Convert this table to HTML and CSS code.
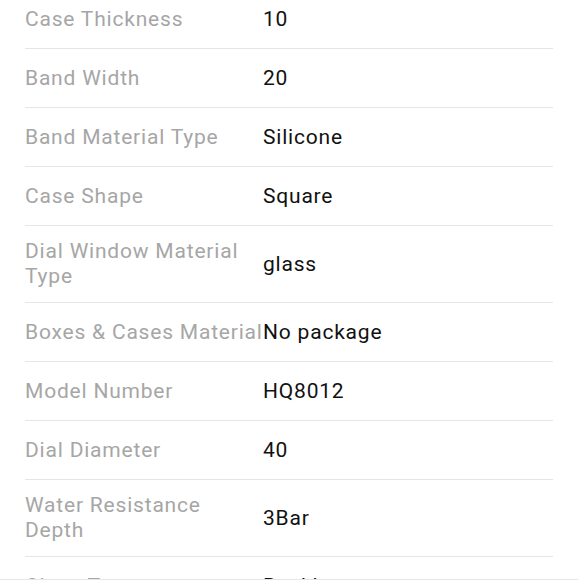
FILE: index.html
```html
<!DOCTYPE html>
<html lang="en">
<head>
<meta charset="utf-8">
<title>Specifications</title>
<link rel="stylesheet" href="styles.css">
</head>
<body>
<div class="specs">
  <div class="row"><div class="label">Case Thickness</div><div class="value">10</div></div>
  <div class="row"><div class="label">Band Width</div><div class="value">20</div></div>
  <div class="row"><div class="label">Band Material Type</div><div class="value">Silicone</div></div>
  <div class="row"><div class="label">Case Shape</div><div class="value">Square</div></div>
  <div class="row"><div class="label">Dial Window Material Type</div><div class="value">glass</div></div>
  <div class="row"><div class="label">Boxes &amp; Cases Material</div><div class="value">No package</div></div>
  <div class="row"><div class="label">Model Number</div><div class="value">HQ8012</div></div>
  <div class="row"><div class="label">Dial Diameter</div><div class="value">40</div></div>
  <div class="row"><div class="label">Water Resistance Depth</div><div class="value">3Bar</div></div>
  <div class="row"><div class="label">Clasp Type</div><div class="value">Buckle</div></div>
</div>
<div class="bottom-bar"></div>
</body>
</html>
```

FILE: styles.css
```css
html, body {
  margin: 0;
  padding: 0;
  background: #ffffff;
}

body {
  font-family: Roboto, "Liberation Sans", Arial, sans-serif;
  font-size: 21px;
  letter-spacing: 0.8px;
  line-height: 25px;
  overflow: hidden;
}

.specs {
  margin: -10px 25px 0 25px;
}

.row {
  box-sizing: border-box;
  display: flex;
  align-items: center;
  min-height: 59px;
  padding: 13px 0;
  border-bottom: 1px solid #e6e6e6;
}

.label {
  flex: 0 0 238px;
  color: #a6a6a6;
}

.value {
  flex: 1 1 auto;
  color: #111111;
}

.bottom-bar {
  position: fixed;
  left: 0;
  right: 0;
  bottom: 0;
  height: 1px;
  background: #e6e6e6;
}
```
